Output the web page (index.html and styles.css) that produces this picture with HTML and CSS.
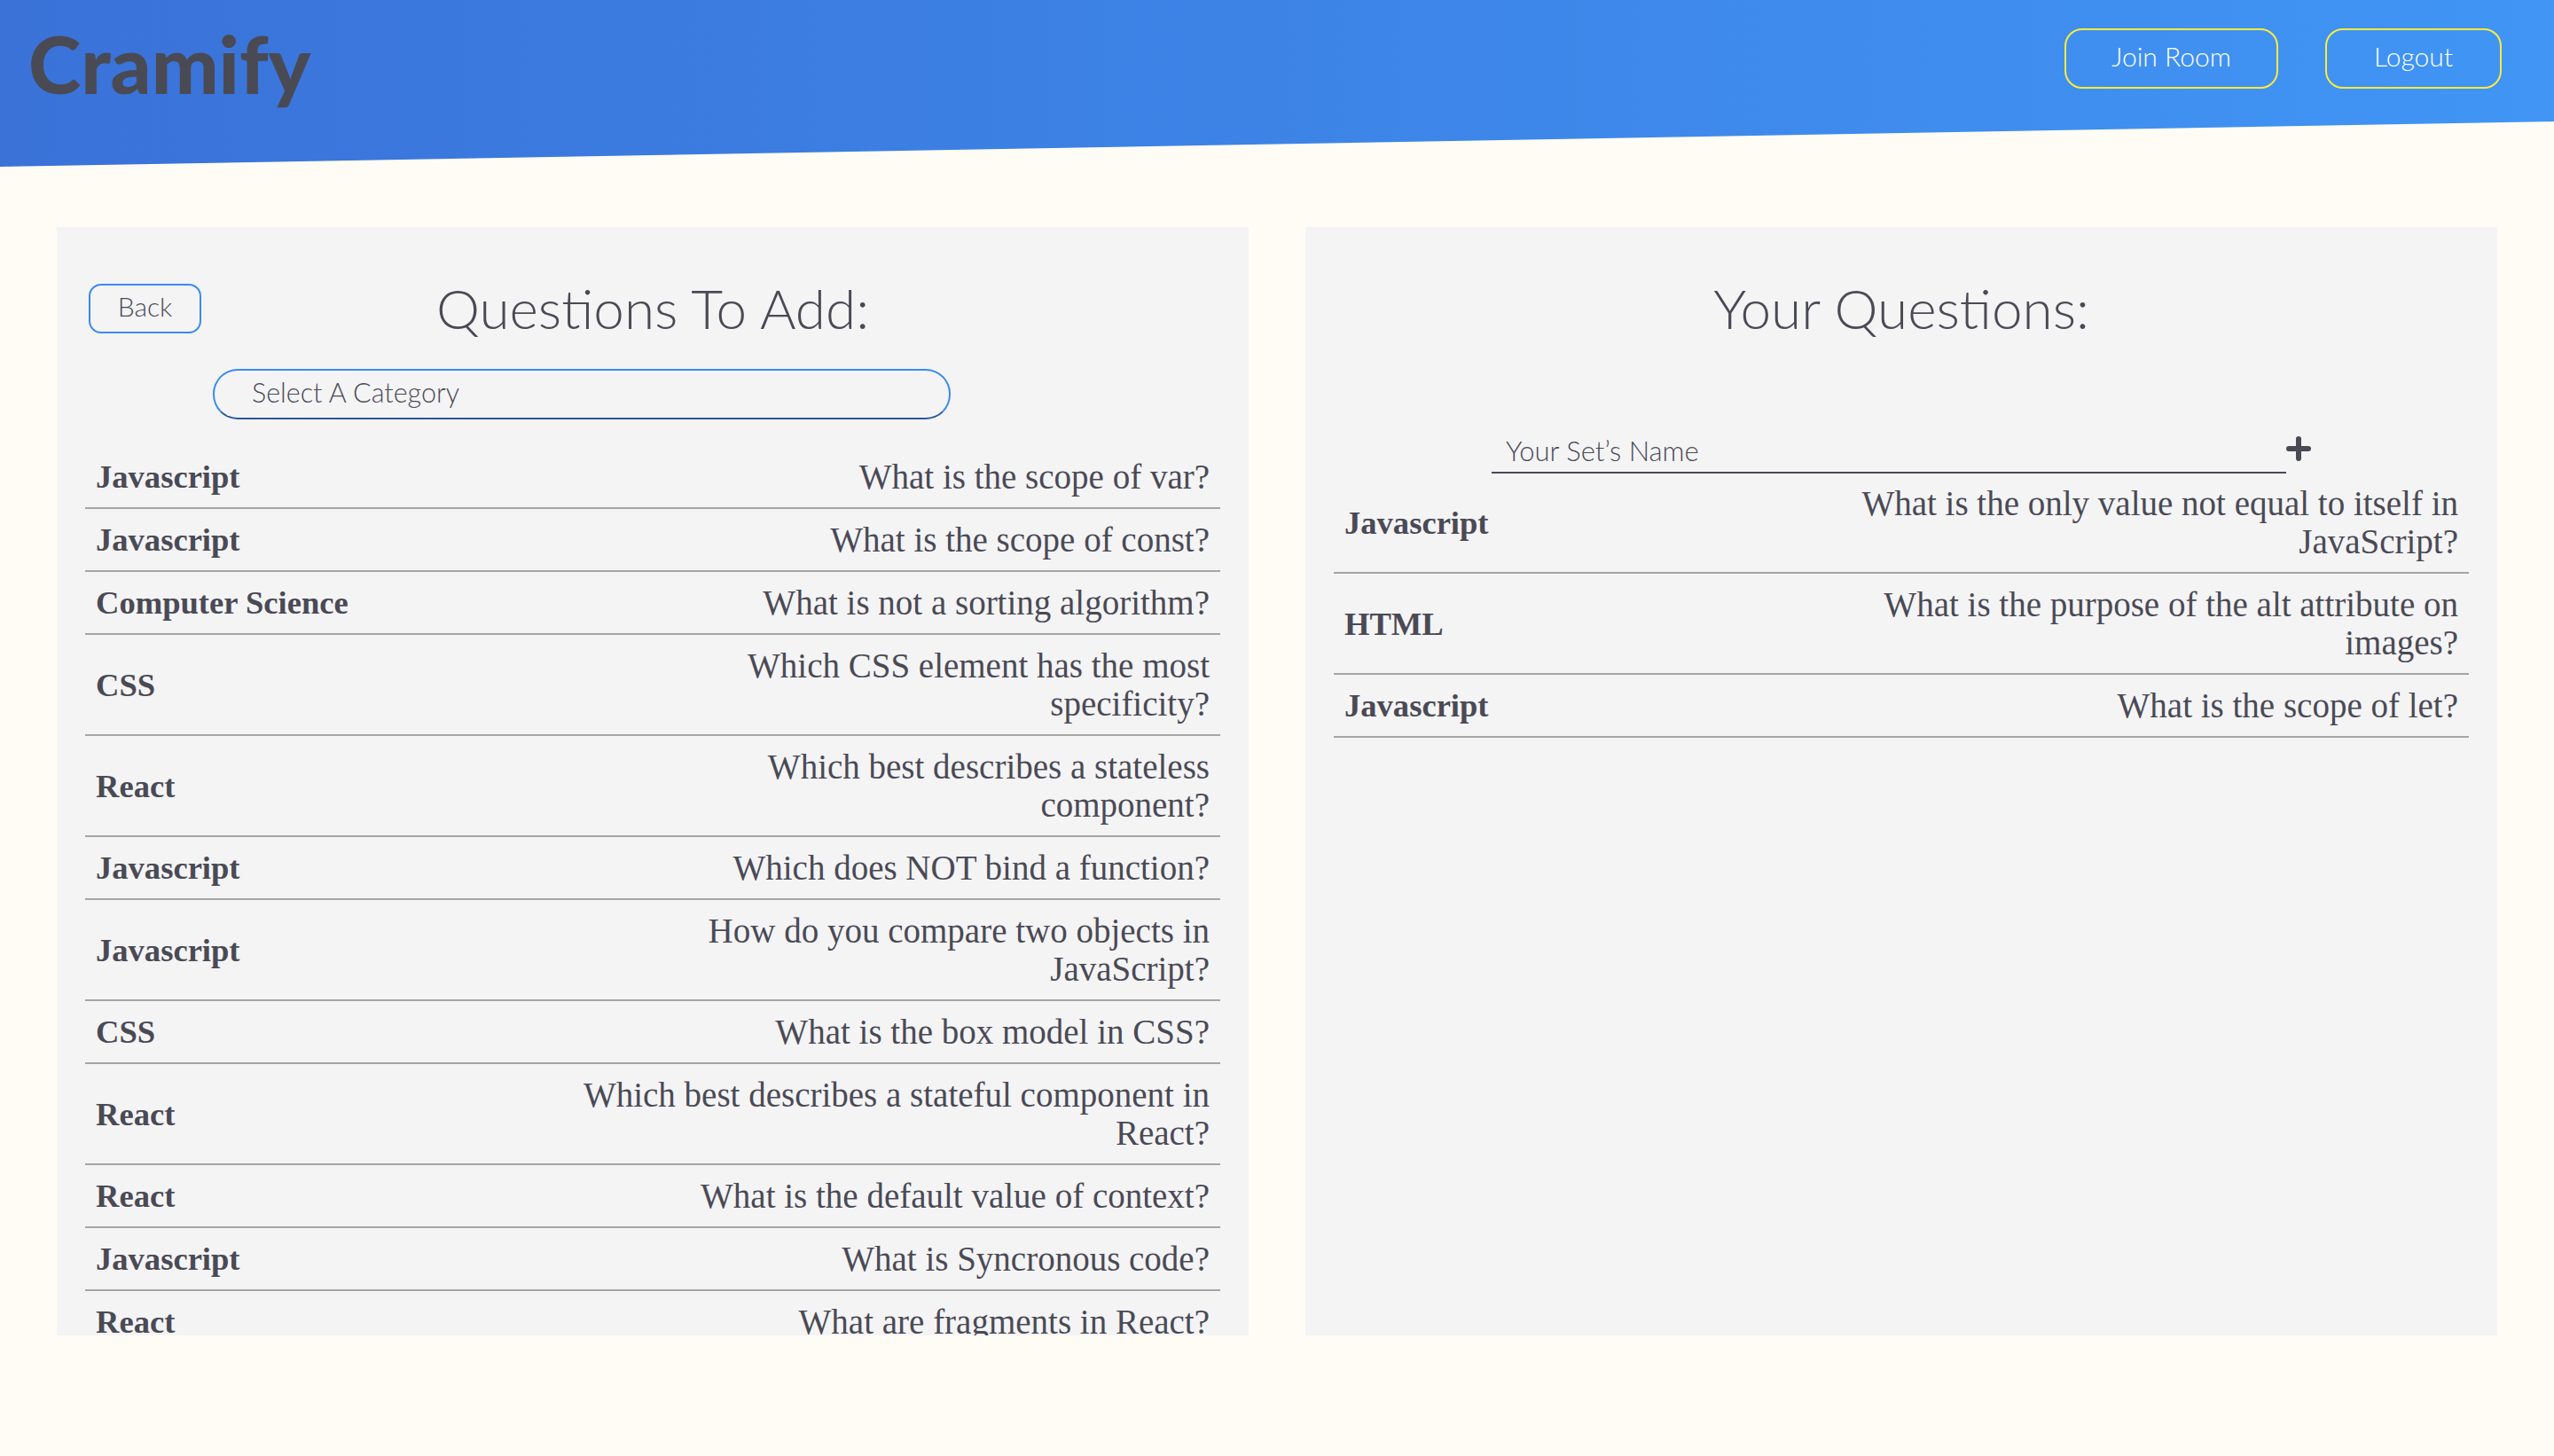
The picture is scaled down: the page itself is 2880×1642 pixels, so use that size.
FILE: index.html
```html
<!DOCTYPE html>
<html lang="en">
<head>
  <meta charset="utf-8">
  <title>Cramify</title>
  <link rel="stylesheet" href="styles.css">
</head>
<body>
<header class="topbar">
  <div class="logo">Cramify</div>
  <nav class="topbar-actions">
    <button class="nav-btn nav-btn-join">Join Room</button>
    <button class="nav-btn nav-btn-logout">Logout</button>
  </nav>
</header>

<main class="board">
  <section class="panel">
    <div class="panel-head">
      <div><button class="back-btn">Back</button></div>
      <h2>Questions To Add:</h2>
    </div>
    <select class="category">
      <option>Select A Category</option>
    </select>
    <div class="rows">
      <div class="row"><span class="topic">Javascript</span><span class="question">What is the scope of var?</span></div>
      <div class="row"><span class="topic">Javascript</span><span class="question">What is the scope of const?</span></div>
      <div class="row"><span class="topic">Computer Science</span><span class="question">What is not a sorting algorithm?</span></div>
      <div class="row"><span class="topic">CSS</span><span class="question">Which CSS element has the most<br>specificity?</span></div>
      <div class="row"><span class="topic">React</span><span class="question">Which best describes a stateless<br>component?</span></div>
      <div class="row"><span class="topic">Javascript</span><span class="question">Which does NOT bind a function?</span></div>
      <div class="row"><span class="topic">Javascript</span><span class="question">How do you compare two objects in<br>JavaScript?</span></div>
      <div class="row"><span class="topic">CSS</span><span class="question">What is the box model in CSS?</span></div>
      <div class="row"><span class="topic">React</span><span class="question">Which best describes a stateful component in<br>React?</span></div>
      <div class="row"><span class="topic">React</span><span class="question">What is the default value of context?</span></div>
      <div class="row"><span class="topic">Javascript</span><span class="question">What is Syncronous code?</span></div>
      <div class="row"><span class="topic">React</span><span class="question">What are fragments in React?</span></div>
    </div>
  </section>

  <section class="panel">
    <div class="panel-head">
      <div></div>
      <h2>Your Questions:</h2>
    </div>
    <div class="set-name">
      <input class="set-input" type="text" placeholder="Your Set’s Name">
      <svg class="add-icon" viewBox="0 0 28 28" width="28" height="28"><path d="M14 3v22M3 14h22" fill="none" stroke="#4a4a55" stroke-width="6" stroke-linecap="round"/></svg>
    </div>
    <div class="rows">
      <div class="row"><span class="topic">Javascript</span><span class="question">What is the only value not equal to itself in<br>JavaScript?</span></div>
      <div class="row"><span class="topic">HTML</span><span class="question">What is the purpose of the alt attribute on<br>images?</span></div>
      <div class="row"><span class="topic">Javascript</span><span class="question">What is the scope of let?</span></div>
    </div>
  </section>
</main>
</body>
</html>
```

FILE: styles.css
```css
* { box-sizing: border-box; }

html, body { height: 100%; }

body {
  margin: 0;
  background: #fffcf5;
  color: #4a4a55;
  font-family: "Lato", "Open Sans", sans-serif;
  overflow: hidden;
}

.topbar {
  display: flex;
  justify-content: space-between;
  align-items: flex-start;
  height: 188px;
  padding: 32px 59px 0 32px;
  background: linear-gradient(90deg, #3a72d8, #4095f5);
  clip-path: polygon(0 0, 100% 0, 100% 137px, 0 100%);
}

.logo {
  margin-top: -3px;
  font-size: 90px;
  font-weight: 900;
  line-height: 84px;
}

.topbar-actions { display: flex; gap: 53px; }

.nav-btn {
  height: 68px;
  padding: 0 0 7px;
  border: 2px solid #ffeb3b;
  border-radius: 20px;
  background: transparent;
  color: #fff;
  font-family: inherit;
  font-size: 30px;
  font-weight: 300;
}
.nav-btn-join { width: 241px; }
.nav-btn-logout { width: 199px; }

.board {
  display: grid;
  grid-template-columns: 1344px 1344px;
  gap: 64px;
  padding: 68px 64px 0;
}

.panel {
  height: 1250px;
  padding: 64px 32px 0;
  background: #f4f4f5;
  overflow: hidden;
}

.panel-head {
  display: grid;
  grid-template-columns: 1fr auto 1fr;
  align-items: start;
  height: 96px;
}
.panel-head h2 {
  margin: -3px 0 0;
  font-size: 62px;
  font-weight: 300;
  line-height: 60px;
}

.back-btn {
  width: 127px;
  height: 56px;
  margin-left: 4px;
  padding: 0 0 7px;
  border: 2px solid #3b8bee;
  border-radius: 14px;
  background: transparent;
  color: inherit;
  font-family: inherit;
  font-size: 30px;
  font-weight: 300;
}

.category {
  display: block;
  width: 832px;
  height: 57px;
  margin-left: 144px;
  padding: 0 42px 5px;
  border: 2px solid #3b8bee;
  border-bottom-color: #28589c;
  border-radius: 28px;
  background: transparent;
  color: inherit;
  font-family: inherit;
  font-size: 30.5px;
  font-weight: 300;
  appearance: none;
}

.panel > .category + .rows { margin-top: 30px; }

.set-name {
  display: flex;
  align-items: flex-start;
  margin: 0 0 0 178px;
  height: 117px;
  padding-top: 77px;
}
.set-input {
  width: 896px;
  height: 41px;
  padding: 0 16px 10px;
  border: 0;
  border-bottom: 2px solid #4a4a55;
  border-radius: 0;
  background: transparent;
  font-family: inherit;
  font-size: 31px;
  font-weight: 300;
  color: inherit;
}
.set-input::placeholder { color: #4a4a55; opacity: 1; }
.add-icon { flex: none; margin-top: -1px; }

.row {
  display: flex;
  justify-content: space-between;
  align-items: center;
  padding: 13px 12px;
  border-bottom: 2px solid #a5a5a5;
  font-family: "Liberation Serif", serif;
  font-size: 39px;
  line-height: 43px;
}
.topic { font-weight: 700; font-size: 36.6px; }
.question { text-align: right; }
```
